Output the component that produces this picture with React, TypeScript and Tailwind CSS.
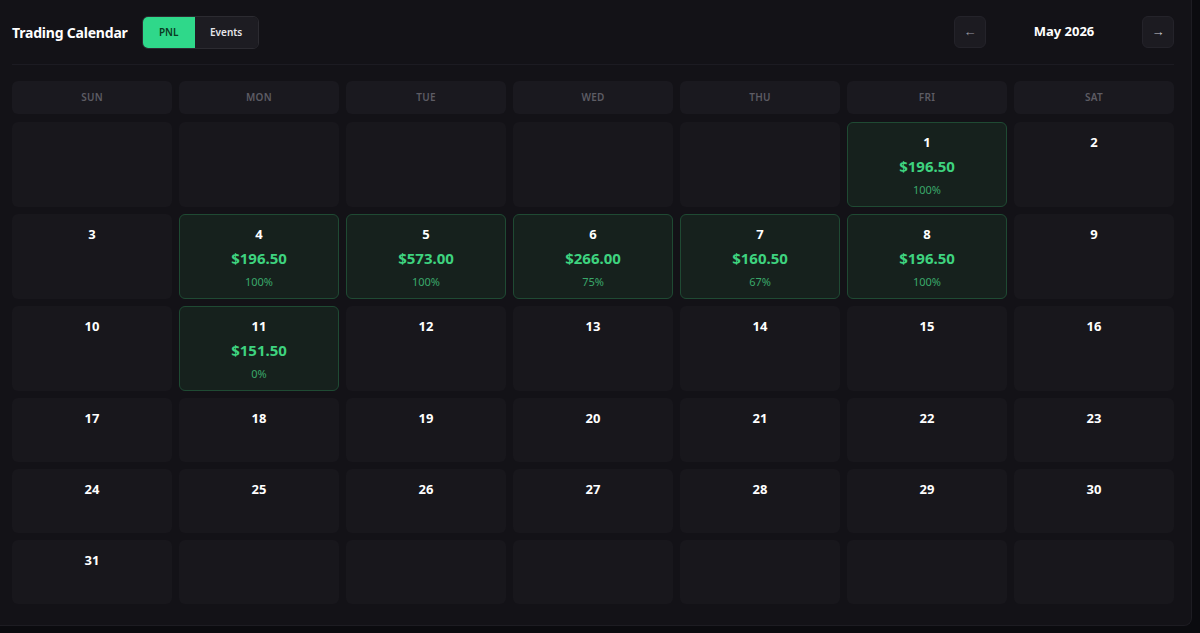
import React from "react";

type Day = { d: number; pnl?: string; pct?: string } | null;

const weeks: Day[][] = [
  [null, null, null, null, null, { d: 1, pnl: "$196.50", pct: "100%" }, { d: 2 }],
  [
    { d: 3 },
    { d: 4, pnl: "$196.50", pct: "100%" },
    { d: 5, pnl: "$573.00", pct: "100%" },
    { d: 6, pnl: "$266.00", pct: "75%" },
    { d: 7, pnl: "$160.50", pct: "67%" },
    { d: 8, pnl: "$196.50", pct: "100%" },
    { d: 9 },
  ],
  [{ d: 10 }, { d: 11, pnl: "$151.50", pct: "0%" }, { d: 12 }, { d: 13 }, { d: 14 }, { d: 15 }, { d: 16 }],
  [{ d: 17 }, { d: 18 }, { d: 19 }, { d: 20 }, { d: 21 }, { d: 22 }, { d: 23 }],
  [{ d: 24 }, { d: 25 }, { d: 26 }, { d: 27 }, { d: 28 }, { d: 29 }, { d: 30 }],
  [{ d: 31 }, null, null, null, null, null, null],
];

const days = ["SUN", "MON", "TUE", "WED", "THU", "FRI", "SAT"];

export default function App() {
  return (
    <div
      className="w-[1200px] h-[633px] bg-[#0b0b0f] overflow-hidden"
      style={{ fontFamily: '"Noto Sans", "Open Sans", sans-serif' }}
    >
      <div className="w-[1192px] h-[626px] bg-[#131217] rounded-br-lg border-r border-b border-[#1d1c22] flex flex-col">
        <div className="ml-3 w-[1162px] h-[65px] flex items-center justify-between border-b border-[#1c1b22]">
          <div className="flex items-center gap-[14px]">
            <span className="text-[14px] font-bold text-white tracking-[-0.2px]">Trading Calendar</span>
            <div className="flex h-[33px] rounded-md border border-[#2c2b31] overflow-hidden">
              <div className="w-[52px] bg-[#2fd88a] flex items-center justify-center text-[10px] font-semibold text-[#0b3a22]">
                PNL
              </div>
              <div className="w-[63px] bg-[#1d1c22] flex items-center justify-center text-[10px] font-semibold text-[#e6e6ea]">
                Events
              </div>
            </div>
          </div>
          <div className="flex items-center">
            <div className="w-[32px] h-[32px] rounded-md bg-[#1c1b21] border border-[#24232a] flex items-center justify-center text-[#9a99a1] text-[13px]">
              ←
            </div>
            <div className="w-[156px] text-center text-[13px] font-bold text-white">May 2026</div>
            <div className="w-[32px] h-[32px] rounded-md bg-[#1c1b21] border border-[#24232a] flex items-center justify-center text-[#c9c8ce] text-[13px]">
              →
            </div>
          </div>
        </div>

        <div className="ml-3 w-[1162px] pt-4 flex flex-col gap-[7px]">
          <div className="grid grid-cols-7 gap-[7px] pb-px">
            {days.map((d) => (
              <div
                key={d}
                className="h-[33px] rounded-md bg-[#1a191f] flex items-center justify-center text-[10px] font-semibold text-[#5d5c64] tracking-wide"
              >
                {d}
              </div>
            ))}
          </div>
          {weeks.map((w, i) => (
            <div key={i} className="grid grid-cols-7 gap-[7px]">
              {w.map((c, j) =>
                c === null ? (
                  <div key={j} className="min-h-[64px] rounded-md bg-[#18171c]" />
                ) : c.pnl ? (
                  <div
                    key={j}
                    className="rounded-md bg-[#16211d] border border-[#1f4a33] flex flex-col items-center pt-[9px] pb-[8px]"
                  >
                    <span className="text-[13px] leading-[20px] font-bold text-white">{c.d}</span>
                    <span className="mt-0.5 text-[15px] leading-[24px] font-bold text-[#3ed37f]">{c.pnl}</span>
                    <span className="mt-1 text-[11px] leading-[16px] text-[#3aa86a]">{c.pct}</span>
                  </div>
                ) : (
                  <div key={j} className="min-h-[64px] rounded-md bg-[#18171c] flex flex-col items-center pt-[10px]">
                    <span className="text-[13px] leading-[20px] font-bold text-white">{c.d}</span>
                  </div>
                )
              )}
            </div>
          ))}
        </div>
      </div>
    </div>
  );
}
